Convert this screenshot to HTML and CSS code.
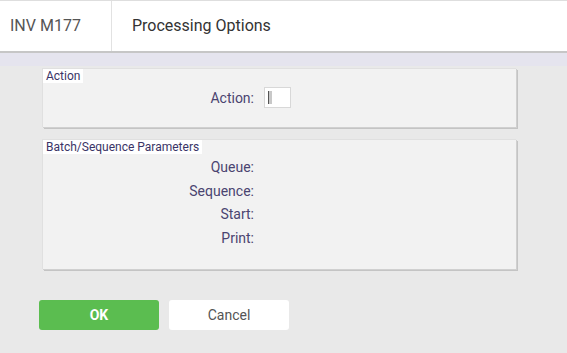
FILE: index.html
```html
<!DOCTYPE html>
<html lang="en">
<head>
    <meta charset="UTF-8">
    <meta name="viewport" content="width=device-width, initial-scale=1.0">
    <title>INV M177 - Processing Options</title>
    <link rel="stylesheet" href="styles.css">
</head>
<body>
    <div class="header">
        <div class="app-id">INV M177</div>
        <div class="title">Processing Options</div>
    </div>
    <div class="band"></div>

    <div class="content">
        <!-- Action -->
        <div class="panel panel-action">
            <div class="legend">Action</div>
            <div class="row">
                <label class="label">Action:</label>
                <div class="input"><span class="caret"></span></div>
            </div>
        </div>

        <!-- Batch / sequence -->
        <div class="panel panel-batch">
            <div class="legend">Batch/Sequence Parameters</div>
            <div class="row"><label class="label">Queue:</label></div>
            <div class="row"><label class="label">Sequence:</label></div>
            <div class="row"><label class="label">Start:</label></div>
            <div class="row"><label class="label">Print:</label></div>
        </div>

        <div class="actions">
            <button class="btn ok">OK</button>
            <button class="btn cancel">Cancel</button>
        </div>
    </div>
</body>
</html>
```

FILE: styles.css
```css
body {
    margin: 0;
    background-color: #e9e9e9;
    font-family: Roboto, "Liberation Sans", Arial, sans-serif;
    height: 353px;
    overflow: hidden;
}

.header {
    display: flex;
    height: 50px;
    background-color: #fff;
    border-top: 1px solid #dedede;
    border-bottom: 2px solid #c6c6c6;
    font-size: 16px;
}

.app-id {
    width: 101px;
    padding-left: 10px;
    border-right: 1px solid #e2e2e2;
    color: #555;
    line-height: 50px;
}

.title {
    padding-left: 20px;
    color: #333;
    line-height: 50px;
}

.band {
    height: 13px;
    background-color: #e5e4ee;
}

.content {
    padding: 2px 0 0 42px;
}

.panel {
    width: 473px;
    background-color: #f2f2f2;
    border-top: 1px solid #e0e0e0;
    border-left: 1px solid #e0e0e0;
    box-shadow: 1px 1px 0 #d0d0d0, 2px 2px 0 #c4c4c4;
}

.legend {
    width: fit-content;
    background-color: #fff;
    color: #3a3466;
    font-size: 12px;
    height: 14px;
    line-height: 14px;
    padding: 0 3px;
}

.row {
    display: flex;
    align-items: center;
    height: 23.8px;
}

.label {
    width: 211px;
    text-align: right;
    color: #4a4470;
    font-size: 14px;
}

.panel-action {
    height: 58px;
}

.panel-action .row {
    margin-top: 4px;
    height: 21px;
}

.input {
    width: 22px;
    height: 19px;
    margin-left: 10px;
    background-color: #fff;
    border: 1px solid #d8d8d8;
    display: flex;
    align-items: center;
    padding-left: 3px;
}

.caret {
    width: 3px;
    height: 13px;
    background-color: #c8c8c8;
    border-left: 1px solid #555;
}

.panel-batch {
    margin-top: 12px;
    height: 129px;
}

.panel-batch .legend {
    margin-bottom: 1px;
}

.actions {
    display: flex;
    gap: 10px;
    margin: 31px 0 0 -3px;
}

.btn {
    width: 120px;
    height: 30px;
    border: none;
    border-radius: 3px;
    font-family: Roboto, "Liberation Sans", Arial, sans-serif;
    font-size: 14px;
    cursor: pointer;
}

.ok {
    background-color: #5bbd50;
    color: #fff;
    font-weight: bold;
}

.cancel {
    background-color: #fff;
    color: #555;
}
```
